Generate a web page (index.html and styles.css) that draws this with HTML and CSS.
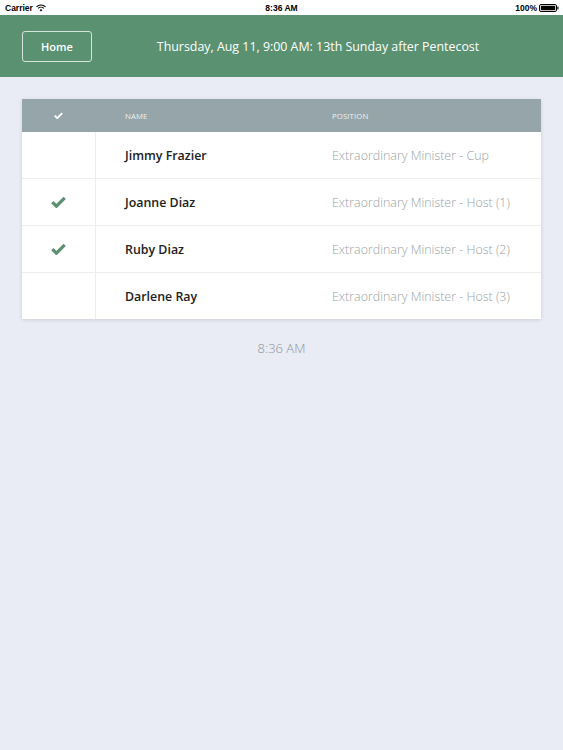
FILE: index.html
```html
<!DOCTYPE html>
<html>
<head>
<meta charset="utf-8">
<link rel="stylesheet" href="styles.css">
</head>
<body>
<div class="statusbar">
  <div class="sb-left">Carrier
    <svg class="wifi" width="10" height="8" viewBox="0 0 10 8"><path d="M0.5 2.8 A6.5 6.5 0 0 1 9.5 2.8" fill="none" stroke="#000" stroke-width="1.1"/><path d="M2.1 4.4 A4.2 4.2 0 0 1 7.9 4.4" fill="none" stroke="#000" stroke-width="1.1"/><path d="M3.6 6 A2 2 0 0 1 6.4 6 L5 7.5 Z" fill="#000"/></svg>
  </div>
  <div class="sb-center">8:36 AM</div>
  <div class="sb-right">100%
    <svg class="battery" width="20" height="8" viewBox="0 0 20 8"><rect x="0.5" y="0.5" width="17" height="7" rx="1.5" fill="none" stroke="#000" stroke-width="1"/><rect x="1.8" y="1.8" width="14.4" height="4.4" rx="0.6" fill="#000"/><rect x="18.3" y="2.6" width="1.2" height="2.8" fill="#000"/></svg>
  </div>
</div>
<header class="topbar">
  <button class="home-btn">Home</button>
  <div class="title">Thursday, Aug 11, 9:00 AM: 13th Sunday after Pentecost</div>
</header>
<main class="content">
  <div class="card">
    <div class="row head">
      <div class="c-check"><svg width="9" height="7" viewBox="0 0 12 9"><path d="M1 4.6 L4.4 8 L11 1.4" fill="none" stroke="#fff" stroke-width="2.6"/></svg></div>
      <div class="c-name">NAME</div>
      <div class="c-pos">POSITION</div>
    </div>
    <div class="row">
      <div class="c-check"></div>
      <div class="c-name">Jimmy Frazier</div>
      <div class="c-pos">Extraordinary Minister - Cup</div>
    </div>
    <div class="row">
      <div class="c-check"><svg class="tick" width="15" height="12" viewBox="0 0 15 12"><path d="M1.3 6.2 L5.4 10.2 L13.7 1.8" fill="none" stroke="#5a9170" stroke-width="3.2"/></svg></div>
      <div class="c-name">Joanne Diaz</div>
      <div class="c-pos">Extraordinary Minister - Host (1)</div>
    </div>
    <div class="row">
      <div class="c-check"><svg class="tick" width="15" height="12" viewBox="0 0 15 12"><path d="M1.3 6.2 L5.4 10.2 L13.7 1.8" fill="none" stroke="#5a9170" stroke-width="3.2"/></svg></div>
      <div class="c-name">Ruby Diaz</div>
      <div class="c-pos">Extraordinary Minister - Host (2)</div>
    </div>
    <div class="row last">
      <div class="c-check"></div>
      <div class="c-name">Darlene Ray</div>
      <div class="c-pos">Extraordinary Minister - Host (3)</div>
    </div>
  </div>
  <div class="time">8:36 AM</div>
</main>
</body>
</html>
```
FILE: styles.css
```css
* { box-sizing: border-box; }
html, body { margin: 0; padding: 0; }
body {
  width: 563px;
  height: 750px;
  background: #e9ecf5;
  font-family: "Open Sans", "Noto Sans", sans-serif;
  overflow: hidden;
}
.statusbar {
  height: 15px;
  background: #fff;
  display: flex;
  align-items: center;
  justify-content: space-between;
  padding: 0 4px 0 5px;
  font-family: "Liberation Sans", Arial, sans-serif;
  font-size: 8.5px;
  font-weight: bold;
  color: #000;
  position: relative;
}
.sb-left, .sb-right { display: flex; align-items: center; gap: 3px; }
.sb-center { position: absolute; left: 0; right: 0; text-align: center; }
.sb-right { gap: 2px; }
.topbar {
  height: 62px;
  background: #5a9170;
  display: flex;
  align-items: center;
  padding: 0 22px;
}
.home-btn {
  width: 70px;
  height: 31px;
  background: transparent;
  border: 1px solid #d6e4db;
  border-radius: 3px;
  color: #fff;
  font-family: "Open Sans", sans-serif;
  font-weight: 600;
  font-size: 11px;
  padding: 0;
  margin-top: 1px;
}
.title {
  flex: 1;
  text-align: center;
  color: #fff;
  font-size: 12.4px;
  padding-left: 3px;
  margin-top: 1px;
}
.content {
  padding: 22px 22px 0;
}
.card {
  background: #fff;
  box-shadow: 0 1px 4px rgba(0, 0, 0, 0.12);
}
.row {
  display: flex;
  align-items: stretch;
  height: 47px;
  border-bottom: 1px solid #eceef0;
}
.row.last { border-bottom: none; height: 46px; }
.row > div { display: flex; align-items: center; }
.c-check {
  width: 74px;
  justify-content: center;
  border-right: 1px solid #eceef0;
}
.c-name {
  width: 236px;
  padding-left: 29px;
  font-size: 12.4px;
  font-weight: 600;
  color: #222;
}
.c-pos {
  flex: 1;
  font-size: 12.45px;
  color: #9b9fa4;
  font-weight: 300;
}
.row.head {
  height: 33px;
  background: #95a5a9;
  border-bottom: none;
}
.row.head .c-check { border-right: none; padding-right: 1px; }
.row.head .c-name, .row.head .c-pos {
  font-size: 7.8px;
  font-weight: 400;
  color: #eef2f3;
  letter-spacing: 0.1px;
}
.tick { margin-right: 1px; }
.time {
  text-align: center;
  margin-top: 20px;
  font-size: 13px;
  font-weight: 300;
  color: #8e939a;
}
```
